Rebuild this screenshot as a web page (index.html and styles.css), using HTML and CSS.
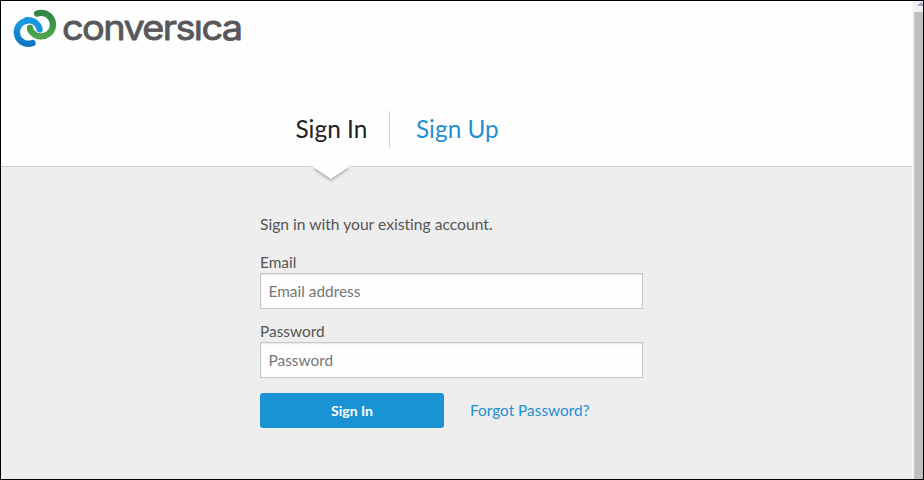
FILE: index.html
```html
<!DOCTYPE html>
<html lang="en">
<head>
<meta charset="utf-8">
<title>Sign In</title>
<link rel="stylesheet" href="styles.css">
</head>
<body>
<div class="window">
  <div class="page">
    <header class="top">
      <svg class="logo" width="260" height="60" viewBox="0 0 260 60" role="img" aria-label="conversica">
        <defs>
          <linearGradient id="blue" x1="0" y1="0" x2="0" y2="1"><stop offset="0" stop-color="#1b9fe3"/><stop offset="1" stop-color="#1276c0"/></linearGradient>
          <linearGradient id="green" x1="0" y1="0" x2="0" y2="1"><stop offset="0" stop-color="#338545"/><stop offset="1" stop-color="#4da64c"/></linearGradient>
        </defs>
        <g fill="none" stroke-width="6.3" stroke-linecap="round">
          <path d="M31.5 42A11.6 11.6 0 1 1 37.6 25.6Q39.3 28.4 38.6 29" stroke="url(#blue)"/>
          <path d="M36 12.6A11.8 11.8 0 1 1 32 32.2Q28.8 29.8 29 26.8" stroke="#fefefe" stroke-width="7.4"/>
          <path d="M36 12.6A11.8 11.8 0 1 1 32 32.2Q28.8 29.8 29 26.8" stroke="url(#green)"/>
          <path d="M29 19.4Q34.8 20 37.3 25Q38.3 27 38.5 28.2" stroke="#fefefe" stroke-width="7"/>
          <path d="M26 19.1Q34.3 19 37.3 25Q38.3 27 38.5 28.2" stroke="#1b95db"/>
        </g>
        <text class="wordmark" x="61" y="38.8" textLength="179.5" lengthAdjust="spacingAndGlyphs">conversıca</text>
      </svg>
      <nav class="tabs">
        <a class="tab current">Sign In</a>
        <a class="tab other">Sign Up</a>
      </nav>
      <svg class="pointer" width="52" height="22" viewBox="0 0 52 22"><path d="M7 0L26 13L45 0Z" fill="#fefefe"/></svg>
    </header>
    <main class="form">
      <p class="intro">Sign in with your existing account.</p>
      <label for="email">Email</label>
      <input id="email" type="text" placeholder="Email address">
      <label for="password">Password</label>
      <input id="password" type="password" placeholder="Password">
      <div class="actions">
        <button>Sign In</button>
        <a class="forgot">Forgot Password?</a>
      </div>
    </main>
  </div>
  <div class="scrollbar"><svg width="7" height="4" viewBox="0 0 7 4"><path d="M0 4L4 0L7 3V4Z" fill="#a4a7c0"/></svg><div class="thumb"></div></div>
</div>
</body>
</html>
```

FILE: styles.css
```css
* { box-sizing: border-box; }
body { margin: 0; font-family: Lato, sans-serif; font-size: 15.4px; color: #555; font-variant-ligatures: none; }
.window { display: flex; width: 924px; height: 480px; border: 1px solid #000; background: #eee; overflow: hidden; }
.page { width: 911px; }
.top { position: relative; height: 166px; background: #fefefe; border-bottom: 1px solid #cdcdcd; }
.logo { display: block; }
.wordmark { font-family: Inter, sans-serif; font-size: 35px; font-weight: 400; letter-spacing: -1.5px; fill: #58585a; stroke: #58585a; stroke-width: .8px; stroke-linejoin: round; }
.tabs { display: flex; margin: 50px 0 0 294px; height: 37px; }
.tab { font-size: 24.4px; line-height: 36px; }
.current { width: 95px; padding-left: .5px; color: #222; border-right: 1px solid #d2d2d2; }
.other { padding-left: 26px; color: #2490d0; }
.pointer { position: absolute; left: 304px; top: 165px; filter: drop-shadow(0 2px 1.5px #aaa); }
.form { width: 383px; margin-left: 259px; padding-top: 46px; }
.intro { margin: 0 0 17px; font-size: 15.65px; line-height: 22px; }
label { display: block; height: 21px; line-height: 20px; }
input + label { height: 20px; margin-top: -1px; padding-bottom: 1px; box-sizing: content-box; }
input { display: block; width: 383px; height: 36px; margin: 0 0 13px; padding: 0 7.5px; border: 1px solid #c8c8c8; border-radius: 0; background: #fefefe; font: 15.4px Lato, sans-serif; box-shadow: inset 0 1px 2px #0000001a; outline: 0; }
input::placeholder { color: #777; opacity: 1; }
.actions { display: flex; align-items: center; gap: 26px; margin-top: 15px; }
button { width: 184px; height: 35px; padding: 0; border: 0; border-radius: 3px; background: #1993d3; color: #fff; font: bold 14px Lato, sans-serif; }
.forgot { padding-bottom: 2px; color: #2490d0; }
.scrollbar { width: 11px; padding-top: 1px; background: #f0f0f2; border-left: 1px solid #f5f5f5; }
.scrollbar svg { display: block; margin-left: 4px; }
.thumb { height: 473px; margin: 6px 0 0 1px; background: #bfbfbf; border-left: 1px solid #c9c9c9; }
```
